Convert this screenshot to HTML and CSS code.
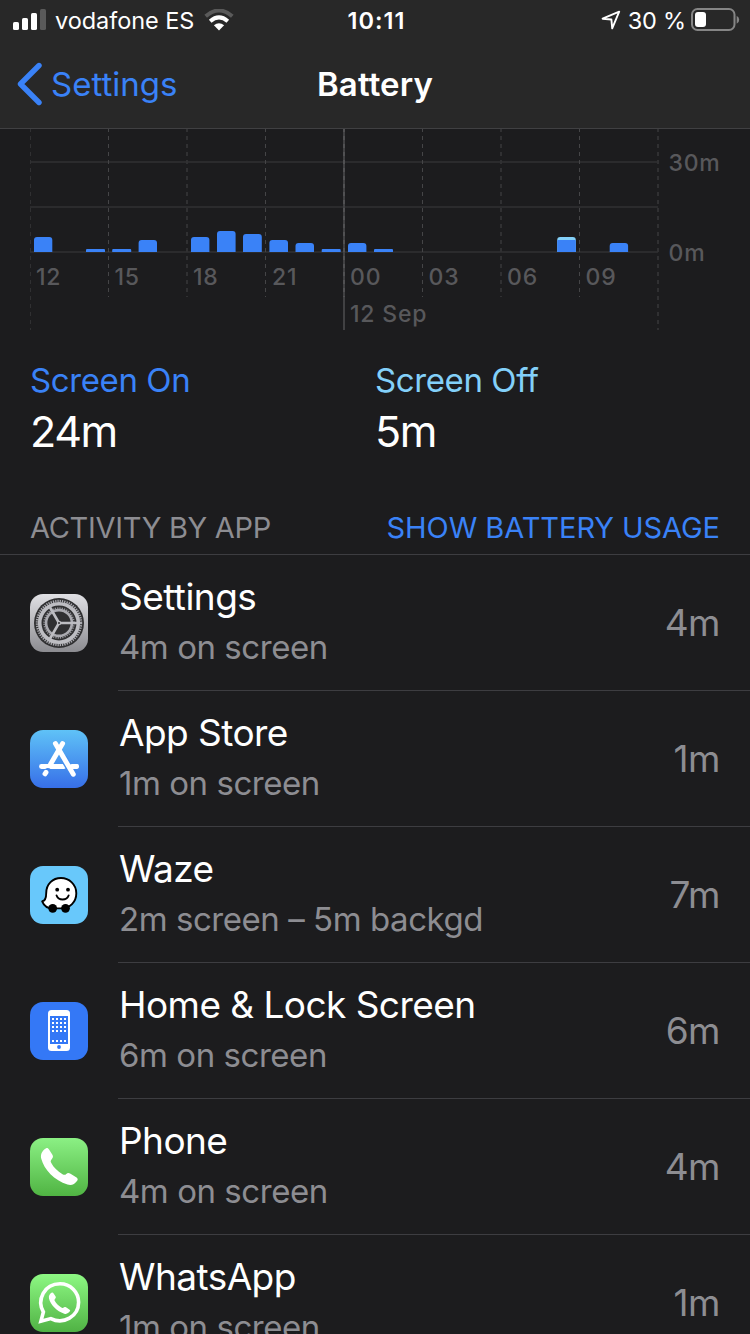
FILE: index.html
```html
<!DOCTYPE html>
<html lang="en">
<head>
<meta charset="utf-8">
<title>Battery</title>
<link rel="stylesheet" href="styles.css">
</head>
<body>
<div class="screen">
  <header class="header">
    <div class="status">
      <div class="status-left">
        <svg class="signal" width="34" height="22" viewBox="0 0 34 22">
          <rect x="0" y="13" width="6" height="8" rx="1.6" fill="#fff"/>
          <rect x="9" y="9" width="6" height="12" rx="1.6" fill="#fff"/>
          <rect x="18" y="4" width="6" height="17" rx="1.6" fill="#fff"/>
          <rect x="27" y="0" width="6" height="21" rx="1.6" fill="#5a5a5a"/>
        </svg>
        <span class="carrier">vodafone ES</span>
        <svg class="wifi" width="30" height="22" viewBox="0 0 30 22">
          <path d="M1.7 7.2Q15-4.2 28.3 7.2" fill="none" stroke="#5a5a5a" stroke-width="4"/>
          <path d="M6.2 12.2Q15 4.6 23.8 12.2" fill="none" stroke="#fff" stroke-width="4"/>
          <path d="M9.9 16.3Q15 12 20.1 16.3L15 21.6Z" fill="#fff"/>
        </svg>
      </div>
      <span class="clock">10:11</span>
      <div class="status-right">
        <svg width="20" height="20" viewBox="0 0 20 20"><path d="M1.6 8.7 18.2 1.7 11.2 18.3 10.4 9.5Z" fill="none" stroke="#fff" stroke-width="1.9" stroke-linejoin="round"/></svg>
        <span class="percent">30 %</span>
        <svg width="49" height="24" viewBox="0 0 49 24">
          <rect x="1" y="1" width="42.5" height="21" rx="5.5" fill="none" stroke="#858585" stroke-width="2"/>
          <rect x="4" y="4" width="11" height="15" rx="3" fill="#fff"/>
          <path d="M45.7 7.8q2.5 1.3 2.5 4t-2.500 4Z" fill="#858585"/>
        </svg>
      </div>
    </div>
    <nav class="nav">
      <a class="back"><svg width="26" height="44" viewBox="0 0 26 44"><path d="M22 3.500 3.500 22 22 40.500" fill="none" stroke="#3a82f7" stroke-width="5.400" stroke-linecap="round" stroke-linejoin="round"/></svg><span>Settings</span></a>
      <h1 class="title">Battery</h1>
    </nav>
  </header>

  <svg class="chart" width="750" height="211" viewBox="0 129 750 211">
    <g stroke="#2b2b2d" stroke-width="2"><path d="M30 162H658M30 207H658M30 252H658"/></g>
    <g class="ticks" stroke-dasharray="4 4">
      <path d="M30.500 128V330" stroke="#303032"/>
      <path d="M108.500 128V297M265.500 128V297M422.500 128V297M579.500 128V297" stroke="#454547"/>
      <path d="M187 128V297M501 128V297M658 128V330" stroke="#303032" stroke-width="2"/>
    </g>
    <path d="M344 128V330" stroke="#414143" stroke-width="2"/>
    <path d="M344 128V297" stroke="#505052" stroke-width="2" stroke-dasharray="4 4"/>
    <g fill="#3a82f7">
      <path d="M34 252v-12q0-3 3-3h12.300q3 0 3 3v12z"/>
      <path d="M86 252v-2q0-1 1-1h17q1 0 1 1v2z"/>
      <path d="M112.200 252v-2q0-1 1-1h17q1 0 1 1v2z"/>
      <path d="M138.600 252v-9q0-3 3-3h12.400q3 0 3 3v9z"/>
      <path d="M191 252v-12q0-3 3-3h12.400q3 0 3 3v12z"/>
      <path d="M217 252v-18q0-3 3-3h12.600q3 0 3 3v18z"/>
      <path d="M243 252v-15q0-3 3-3h12.800q3 0 3 3v15z"/>
      <path d="M269.400 252v-9q0-3 3-3h12.600q3 0 3 3v9z"/>
      <path d="M295.500 252v-6q0-3 3-3h12.500q3 0 3 3v6z"/>
      <path d="M321.700 252v-2q0-1 1-1h17q1 0 1 1v2z"/>
      <path d="M348 252v-6q0-3 3-3h12.400q3 0 3 3v6z"/>
      <path d="M374 252v-2q0-1 1-1h17q1 0 1 1v2z"/>
      <path d="M557.200 252v-12q0-3 3-3h12.600q3 0 3 3v12z" fill="#83d0f9"/>
      <path d="M557.200 252v-11.500q0-.5 1-.5h16.600q1 0 1 .5v11.500z"/>
      <path d="M609.700 252v-6q0-3 3-3h12.400q3 0 3 3v6z"/>
    </g>
    <g class="axis">
      <text x="36" y="285">12</text><text x="114.500" y="285">15</text><text x="193" y="285">18</text><text x="272" y="285">21</text>
      <text x="350" y="285">00</text><text x="428.500" y="285">03</text><text x="507" y="285">06</text><text x="585.500" y="285">09</text>
      <text x="350" y="322">12 Sep</text>
      <text x="668.500" y="171">30m</text><text x="668.500" y="261">0m</text>
    </g>
  </svg>

  <section class="totals">
    <div class="total"><span class="label on">Screen On</span><span class="value">24m</span></div>
    <div class="total"><span class="label off">Screen Off</span><span class="value">5m</span></div>
  </section>

  <div class="list-head"><span class="activity">ACTIVITY BY APP</span><a class="toggle">SHOW BATTERY USAGE</a></div>

  <main class="list">
    <div class="row">
      <svg class="icon" viewBox="0 0 58 58">
        <defs><linearGradient id="gs" x1="0" y1="0" x2="0" y2="1"><stop offset="0" stop-color="#e0e0e4"/><stop offset="1" stop-color="#8c8c91"/></linearGradient></defs>
        <rect width="58" height="58" rx="13" fill="url(#gs)"/>
        <circle cx="29" cy="29" r="25" fill="#303032"/>
        <circle cx="29" cy="29" r="22" fill="none" stroke="#aaaab0" stroke-width="2.400" stroke-dasharray="1.300 1.004"/>
        <circle cx="29" cy="29" r="19.300" fill="none" stroke="#bdbdc2" stroke-width="3.600"/>
        <circle cx="29" cy="29" r="14.900" fill="none" stroke="#98989d" stroke-width="1.600" stroke-dasharray="1.200 1.140"/>
        <circle cx="29" cy="29" r="12.900" fill="none" stroke="#aaaab0" stroke-width="2.600"/>
        <path d="M29 29H48M29 29 19.500 12.500M29 29 19.500 45.500" stroke="#bdbdc2" stroke-width="2.600"/>
        <circle cx="29" cy="29" r="2.200" fill="#bdbdc2"/><circle cx="29" cy="29" r="1" fill="#303032"/>
      </svg>
      <div class="body"><div class="text"><span class="name">Settings</span><span class="detail">4m on screen</span></div><span class="time">4m</span></div>
    </div>
    <div class="row">
      <svg class="icon" viewBox="0 0 58 58">
        <defs><linearGradient id="ga" x1="0" y1="0" x2="0" y2="1"><stop offset="0" stop-color="#5fc2f7"/><stop offset="1" stop-color="#376fe8"/></linearGradient></defs>
        <rect width="58" height="58" rx="13" fill="url(#ga)"/>
        <g stroke="#fff" stroke-width="4.900" stroke-linecap="round" fill="none">
          <path d="M32.600 13.500 20.500 34.300M16 42.300 15 43.800M11.500 36.500H34M40 36.500H46.500"/>
          <path d="M33.500 27.700 39 37.200" stroke="#4691ef" stroke-width="7.400" stroke-linecap="butt"/>
          <path d="M25.400 13.500 43.300 44.300M42 36.500H46.500"/>
        </g>
        <path d="M15.500 39.500Q19 37.500 21 40.800" fill="none" stroke="#4187ed" stroke-width="1.300"/>
      </svg>
      <div class="body"><div class="text"><span class="name">App Store</span><span class="detail">1m on screen</span></div><span class="time">1m</span></div>
    </div>
    <div class="row">
      <svg class="icon" viewBox="0 0 58 58">
        <rect width="58" height="58" rx="13" fill="#68c8fb"/>
        <path d="M16.200 27.200C16.200 18 22.800 12 31 12S46.300 18.500 46.300 27.200 40 42.400 31 42.400H23C17.500 42.400 13.800 39.500 12.200 35.300 15.500 34.800 16.200 32 16.200 27.200Z" fill="#fff" stroke="#000" stroke-width="1.900" stroke-linejoin="round"/>
        <circle cx="22.700" cy="42.300" r="4.400"/><circle cx="35.500" cy="42.300" r="4.400"/>
        <circle cx="27.200" cy="23.700" r="1.900"/><circle cx="38" cy="23.700" r="1.900"/>
        <path d="M26.500 29.400Q28 33.500 32.600 33.500T38.700 29.400" fill="none" stroke="#000" stroke-width="1.800" stroke-linecap="round"/>
      </svg>
      <div class="body"><div class="text"><span class="name">Waze</span><span class="detail">2m screen – 5m backgd</span></div><span class="time">7m</span></div>
    </div>
    <div class="row">
      <svg class="icon" viewBox="0 0 58 58">
        <rect width="58" height="58" rx="13" fill="#3478f6"/>
        <rect x="18" y="8" width="22" height="41" rx="3.500" fill="#fff"/>
        <rect x="20" y="14" width="18" height="28" fill="#3478f6"/>
        <path d="M22 17H37M22 21H37M22 25H37M22 29H37M22 39H37" stroke="#fff" stroke-width="2" stroke-dasharray="2 2"/>
        <circle cx="29" cy="45" r="1.900" fill="#3478f6"/>
      </svg>
      <div class="body"><div class="text"><span class="name">Home &amp; Lock Screen</span><span class="detail">6m on screen</span></div><span class="time">6m</span></div>
    </div>
    <div class="row">
      <svg class="icon" viewBox="0 0 58 58">
        <defs><linearGradient id="gp" x1="0" y1="0" x2="0" y2="1"><stop offset="0" stop-color="#8bf084"/><stop offset="1" stop-color="#50b443"/></linearGradient></defs>
        <rect width="58" height="58" rx="13" fill="url(#gp)"/>
        <path d="M16.200 10.200C17.300 9.700 18.300 10.400 19.200 11.700L22.400 16.800C23.500 18.700 22.900 19.900 21.500 21.400 20.400 22.700 20.500 23.500 21.300 25 23.500 29.300 27.500 33.300 32.500 36.200 34.200 37.200 35.200 37 36.300 35.900 37.500 34.700 38.900 34.700 40.500 35.700L46.200 39.300C47.700 40.300 48.200 41.500 47.200 42.700 44.500 46.300 41.500 48 37.500 46.600 24.500 42.500 14 31.500 11.200 20.500 10.200 16 12.500 12.200 16.200 10.200Z" fill="#fff"/>
      </svg>
      <div class="body"><div class="text"><span class="name">Phone</span><span class="detail">4m on screen</span></div><span class="time">4m</span></div>
    </div>
    <div class="row">
      <svg class="icon" viewBox="0 0 58 58">
        <defs><linearGradient id="gw" x1="0" y1="0" x2="0" y2="1"><stop offset="0" stop-color="#8df883"/><stop offset="1" stop-color="#50b244"/></linearGradient></defs>
        <rect width="58" height="58" rx="13" fill="url(#gw)"/>
        <path d="M10.900 47.200 13.400 38C6.500 26 14.200 9.800 30 9.800 40.500 9.800 48.600 18 48.600 28.300 48.600 42.500 33.500 51 20.800 44.600Z" fill="none" stroke="#fff" stroke-width="3.600"/>
        <path transform="translate(12.500 12.600) scale(.58)" d="M16.200 10.200C17.300 9.700 18.300 10.400 19.200 11.700L22.400 16.800C23.500 18.700 22.900 19.900 21.500 21.400 20.400 22.700 20.500 23.500 21.300 25 23.500 29.300 27.500 33.300 32.500 36.200 34.200 37.200 35.200 37 36.300 35.900 37.500 34.700 38.900 34.700 40.500 35.700L46.200 39.300C47.700 40.300 48.200 41.500 47.200 42.700 44.500 46.300 41.500 48 37.500 46.600 24.500 42.500 14 31.500 11.200 20.500 10.200 16 12.500 12.200 16.200 10.200Z" fill="#fff"/>
      </svg>
      <div class="body"><div class="text"><span class="name">WhatsApp</span><span class="detail">1m on screen</span></div><span class="time">1m</span></div>
    </div>
  </main>
</div>
</body>
</html>
```

FILE: styles.css
```css
* { box-sizing: border-box; }
body { margin: 0; background: #1c1c1e; color: #fff; font-family: Inter, "Liberation Sans", sans-serif; overflow: hidden; }
svg { display: block; flex: none; }
.screen { width: 750px; height: 1334px; overflow: hidden; }
.header { height: 129px; background: #282828; border-bottom: 1px solid #404042; }

.status { display: grid; grid-template-columns: 1fr auto 1fr; align-items: center; height: 40px; padding: 0 10px 0 13px; font-size: 23.500px; line-height: 38px; }
.status span { padding-top: 2px; }
.status-left { display: flex; align-items: center; }
.carrier { margin-left: 8px; letter-spacing: -.05px; }
.wifi { margin-left: 10px; }
.clock { font-weight: 600; letter-spacing: 1px; }
.status-right { display: flex; align-items: center; justify-content: flex-end; }
.percent { margin: 0 5px 0 7px; letter-spacing: -.2px; }

.nav { display: grid; grid-template-columns: 1fr auto 1fr; align-items: center; height: 88px; padding: 0 17px; }
.back { display: flex; align-items: center; gap: 8px; color: #3a82f7; font-size: 33px; letter-spacing: 0; }
.title { margin: 0; font-size: 33px; font-weight: 600; letter-spacing: .15px; }

.axis text { font-size: 23px; font-weight: 500; fill: #58585b; letter-spacing: .8px; }

.totals { display: grid; grid-template-columns: 345px 1fr; padding: 20px 30px 0; height: 160px; }
.total { display: flex; flex-direction: column; }
.label { font-size: 33px; line-height: 40px; letter-spacing: -.4px; }
.on { color: #3a82f7; }
.off { color: #83d0f9; }
.value { margin-top: 7px; font-size: 43px; line-height: 48px; letter-spacing: -1.400px; }

.list-head { display: flex; justify-content: space-between; height: 55px; padding: 8px 30px 0; border-bottom: 1px solid #3d3d41; font-size: 29px; line-height: 40px; color: #8d8d92; letter-spacing: -.3px; }
.toggle { color: #3a82f7; letter-spacing: -.06px; }

.row { display: flex; align-items: center; height: 136px; padding-left: 30px; }
.icon { width: 58px; height: 58px; }
.body { display: flex; flex: 1; align-items: center; justify-content: space-between; height: 136px; margin-left: 30px; padding: 0 30px 0 1px; border-bottom: 1px solid #3d3d41; }
.text { display: flex; flex-direction: column; padding-bottom: 2px; }
.name { font-size: 37px; line-height: 50px; letter-spacing: -.55px; }
.detail { font-size: 33px; line-height: 50px; letter-spacing: -.45px; color: #8d8d92; }
.time { font-size: 37px; letter-spacing: -.5px; color: #8d8d92; }
```
